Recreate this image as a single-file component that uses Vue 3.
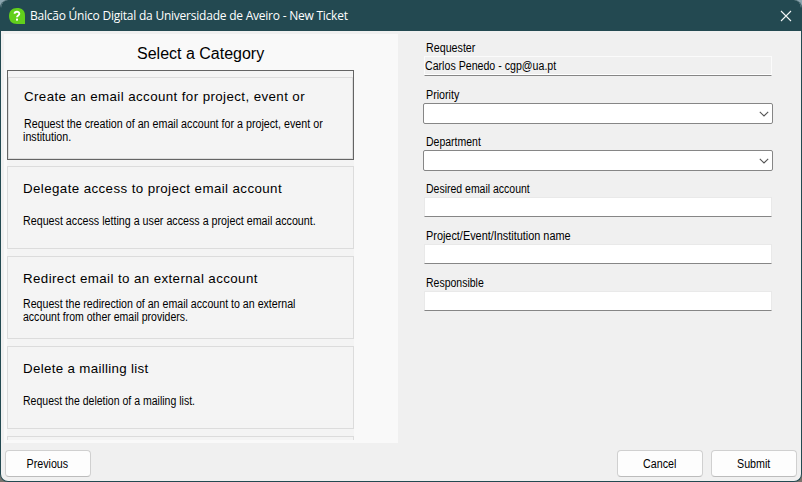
<script setup>
const categories = [
  {
    title: 'Create an email account for project, event or',
    lines: ['Request the creation of an email account for a project, event or', 'institution.'],
    key: 'create',
    selected: true,
  },
  {
    title: 'Delegate access to project email account',
    lines: ['Request access letting a user access a project email account.'],
    key: 'delegate',
  },
  {
    title: 'Redirect email to an external account',
    lines: ['Request the redirection of an email account to an external', 'account from other email providers.'],
    key: 'redirect',
  },
  {
    title: 'Delete a mailling list',
    lines: ['Request the deletion of a mailing list.'],
    key: 'delete',
  },
]

const fields = [
  { label: 'Requester', type: 'readonly', value: 'Carlos Penedo - cgp@ua.pt', key: 'requester' },
  { label: 'Priority', type: 'combo', key: 'priority' },
  { label: 'Department', type: 'combo', key: 'department' },
  { label: 'Desired email account', type: 'text', key: 'email' },
  { label: 'Project/Event/Institution name', type: 'text', key: 'project' },
  { label: 'Responsible', type: 'text', key: 'responsible' },
]
</script>

<template>
  <div class="desktop">
    <div class="window">
      <header class="titlebar">
        <svg class="logo" width="16" height="16" viewBox="0 0 16 16">
          <path d="M8 0C13 0 16 2.500 16 7.500V16H8C2.800 16 0 13 0 8S2.800 0 8 0Z" fill="#62cf1c" />
          <path d="M5.600 5.700C5.700 3.100 10.400 3.100 10.300 5.800C10.300 7.400 8 7.500 8 9.300" fill="none" stroke="#fff" stroke-width="1.900" />
          <rect x="7" y="10.600" width="2" height="2" fill="#fff" />
        </svg>
        <span class="caption">Balcão Único Digital da Universidade de Aveiro - New Ticket</span>
        <svg class="close" width="12" height="12" viewBox="0 0 12 12">
          <path d="M1 1L11 11M11 1L1 11" fill="none" stroke="#f2f6f6" stroke-width="1.100" />
        </svg>
      </header>

      <main class="body">
        <section class="categories">
          <h1 class="heading"><span>Select a Category</span></h1>
          <div class="list">
            <div
              v-for="c in categories"
              :key="c.key"
              class="slot"
              :class="[c.key, { selected: c.selected }]"
            >
              <div class="card">
                <div class="card-title"><span>{{ c.title }}</span></div>
                <div class="desc" :class="{ single: c.lines.length === 1 }">
                  <div v-for="(l, i) in c.lines" :key="i" class="line" :class="'l' + i">
                    <span class="narrow">{{ l }}</span>
                  </div>
                </div>
              </div>
            </div>
            <div class="slot"><div class="card"></div></div>
          </div>
        </section>

        <section class="form">
          <div v-for="f in fields" :key="f.key" class="field">
            <label class="label" :class="f.key"><span class="narrow">{{ f.label }}</span></label>
            <div class="input" :class="f.type">
              <span v-if="f.value" class="value narrow">{{ f.value }}</span>
              <svg v-if="f.type === 'combo'" width="10" height="6" viewBox="0 0 10 6">
                <path d="M0.800 0.800L5 5L9.200 0.800" fill="none" stroke="#555" stroke-width="1.100" />
              </svg>
            </div>
          </div>
        </section>
      </main>

      <footer class="footer">
        <button class="btn"><span class="narrow">Previous</span></button>
        <div class="right">
          <button class="btn"><span class="narrow">Cancel</span></button>
          <button class="btn"><span class="narrow">Submit</span></button>
        </div>
      </footer>
    </div>
  </div>
</template>

<style>
body {
  margin: 0;
  background: #234951;
}
</style>

<style scoped>
.desktop {
  width: 802px;
  height: 482px;
  box-sizing: border-box;
  overflow: hidden;
  background: linear-gradient(to bottom, #8ba5af 0 50%, #77736d 50%);
  font-family: 'Liberation Sans', Arial, sans-serif;
  font-size: 12px;
  line-height: 13px;
  color: #000;
  white-space: nowrap;
}
.narrow {
  display: inline-block;
  transform: scaleX(0.892);
  transform-origin: 0 50%;
}
.window {
  width: 802px;
  height: 482px;
  box-sizing: border-box;
  display: flex;
  flex-direction: column;
  background: #f0f0f0;
  border: 1px solid #234951;
  border-top: 0;
  border-radius: 8px;
  overflow: hidden;
}
.titlebar {
  height: 31px;
  flex: none;
  box-sizing: border-box;
  display: flex;
  align-items: center;
  padding: 0 9px 0 8px;
  background: #234951;
  color: #fff;
}
.logo {
  flex: none;
}
.caption {
  margin-left: 5px;
  font-family: 'Open Sans', 'Noto Sans', sans-serif;
  font-size: 12px;
  line-height: 16px;
  letter-spacing: -0.23px;
}
.close {
  margin-left: auto;
}
.body {
  display: flex;
  height: 412px;
  flex: none;
}
.categories {
  width: 394px;
  margin: 3px 0 0 3px;
  background: #f9f9f9;
  overflow: hidden;
  box-sizing: border-box;
  padding: 0 0 3px 3px;
  display: flex;
  flex-direction: column;
}
.heading {
  margin: 0;
  height: 36px;
  flex: none;
  box-sizing: border-box;
  padding: 10px 0 0 130px;
  font-size: 16px;
  font-weight: 400;
  line-height: 19px;
}
.list {
  width: 347px;
  flex: 1;
  min-height: 0;
  overflow: hidden;
  background: #f4f4f4;
}
.slot {
  height: 83px;
  margin-bottom: 7px;
}
.slot.selected {
  height: 90px;
  margin-bottom: 6px;
  box-sizing: border-box;
  padding-top: 6px;
  border: 1px solid #646464;
}
.selected .card {
  height: 82px;
  padding-top: 8px;
}
.card {
  height: 83px;
  box-sizing: border-box;
  border: 1px solid #dcdcdc;
  padding: 11px 0 0 15px;
}
.card-title {
  height: 22px;
  font-size: 13.33px;
  line-height: 22px;
  letter-spacing: 0.4px;
}
.delete .card-title {
  letter-spacing: 0.32px;
}
.desc {
  padding-top: 8px;
}
.desc.single {
  padding-top: 15px;
}
.line {
  height: 13px;
}
.create .desc {
  padding-top: 10px;
}
.create .l1 {
  margin-left: -1px;
}
.redirect .l0 .narrow {
  transform: scaleX(0.886);
}
.redirect .l1 .narrow,
.delete .narrow {
  transform: scaleX(0.877);
}
.form {
  padding: 10px 0 0 26px;
}
.field {
  height: 47px;
  width: 350px;
}
.label {
  display: block;
  height: 15px;
  line-height: 15px;
  padding-left: 2px;
}
.label.department .narrow,
.label.email .narrow,
.label.responsible .narrow {
  transform: scaleX(0.874);
}
.label.project .narrow {
  transform: scaleX(0.907);
}
.input {
  box-sizing: border-box;
  display: flex;
  align-items: center;
}
.readonly,
.text {
  width: 348px;
  height: 20px;
  background: #fff;
  border: 1px solid #e9e9e9;
  border-bottom: 1px solid #868686;
}
.readonly {
  background: #f0f0f0;
  border-color: #fbfbfb;
  border-bottom-color: #868686;
  box-shadow: inset 0 -1px #fff;
}
.combo {
  width: 350px;
  height: 21px;
  margin-left: -1px;
  background: #fff;
  border: 1px solid #868686;
  border-radius: 2px;
  justify-content: flex-end;
  padding-right: 3px;
}
.value {
  transform: scaleX(0.885);
}
.footer {
  display: flex;
  justify-content: space-between;
  padding: 7px 4px 0 4px;
}
.right {
  display: flex;
  gap: 8px;
}
.btn {
  width: 86px;
  height: 27px;
  box-sizing: border-box;
  padding: 1px 1px 0 0;
  border: 1px solid #d0d0d0;
  border-bottom-color: #bcbcbc;
  border-radius: 4px;
  background: #fdfdfd;
  font: inherit;
  color: #000;
}
.btn .narrow {
  transform-origin: 50% 50%;
}
</style>
